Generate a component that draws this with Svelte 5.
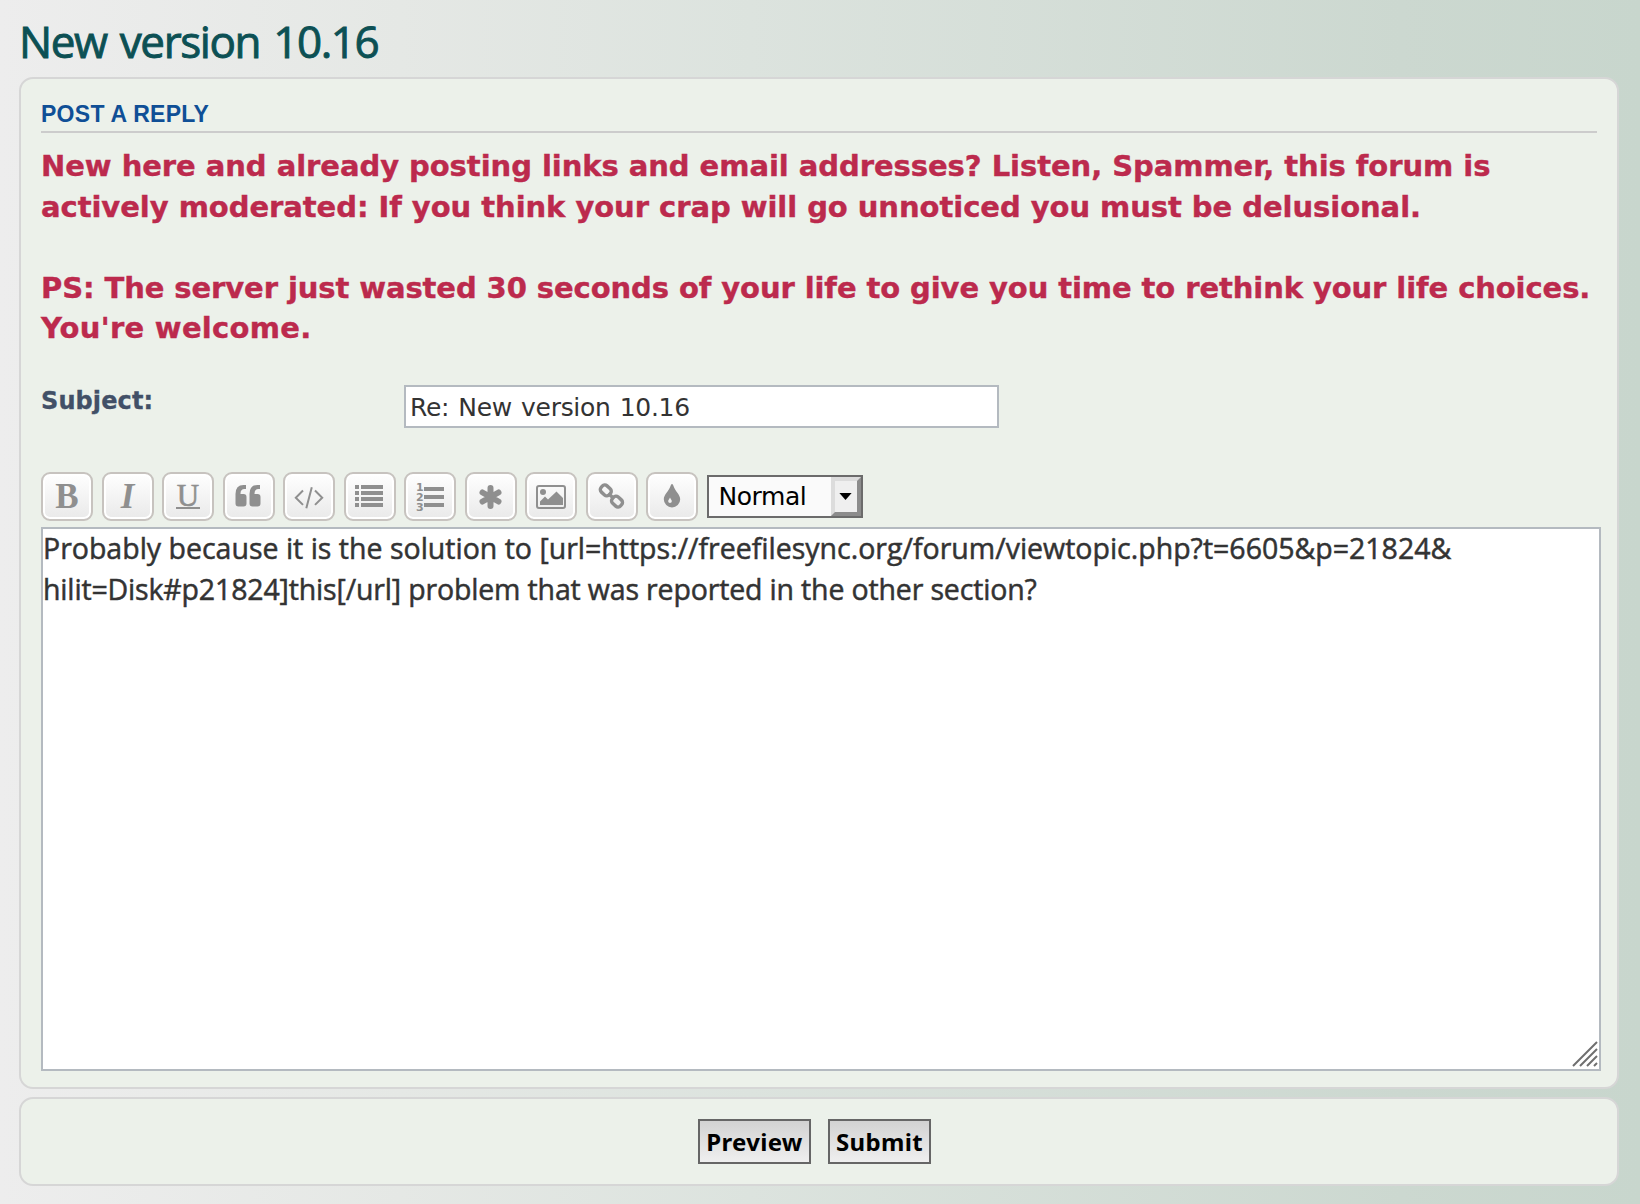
<script>
    let subject = 'Re: New version 10.16';

    const tools = ['bold', 'italic', 'underline', 'quote', 'code', 'list', 'ordered', 'asterisk', 'image', 'link', 'color'];
</script>

<main>
    <h1>New version 10.16</h1>

    <section class="panel editor">
        <h2>Post a reply</h2>
        <p class="warning">
            New here and already posting links and email addresses? Listen, Spammer, this forum is<br />
            actively moderated: If you think your crap will go unnoticed you must be delusional.<br />
            <br />
            <span class="tight">PS: The server just wasted 30 seconds of your life to give you time to rethink your life choices.</span><br />
            <span class="loose">You're welcome.</span>
        </p>

        <div class="subject">
            <label for="subject">Subject:</label>
            <input id="subject" type="text" bind:value={subject} />
        </div>

        <div class="toolbar">
            {#each tools as tool}
                <button class="tool" type="button" aria-label={tool}>
                    {#if tool === 'bold'}
                        <b class="letter">B</b>
                    {:else if tool === 'italic'}
                        <b class="letter italic">I</b>
                    {:else if tool === 'underline'}
                        <span class="letter underline">U</span>
                    {:else}
                        <svg width="48" height="45" viewBox="0 0 48 45" fill="#8f8f8f">
                            {#if tool === 'quote'}
                                <path d="M21 11v4h-1.500q-4 0-4 4.500v.500h3q3 0 3 3v6.500q0 3-3 3h-5q-3 0-3-3V20q0-9 8-9zM35 11v4h-1.500q-4 0-4 4.500v.500h3q3 0 3 3v6.500q0 3-3 3h-5q-3 0-3-3V20q0-9 8-9z" />
                            {:else if tool === 'code'}
                                <path d="M18 16.500l-7.200 7.200 7.200 7.200M30 16.500l7.200 7.200-7.200 7.200M26.800 13.300l-5.500 21" fill="none" stroke="#8f8f8f" stroke-width="2" />
                            {:else if tool === 'list'}
                                <path d="M9 11h4v4H9zM15 11h22v4H15zM9 17h4v4H9zM15 17h22v4H15zM9 23h4v4H9zM15 23h22v4H15zM9 29h4v4H9zM15 29h22v4H15z" />
                            {:else if tool === 'ordered'}
                                <path d="M18 13h20v4H18zM18 21h20v4H18zM18 29h20v4H18z" />
                                <text x="10" y="17">1</text>
                                <text x="10" y="27">2</text>
                                <text x="10" y="37">3</text>
                            {:else if tool === 'asterisk'}
                                <path d="M23.500 14v18M15.500 18.500l16 9M15.500 27.500l16-9" stroke="#8f8f8f" stroke-width="6" stroke-linecap="round" />
                            {:else if tool === 'image'}
                                <rect x="10" y="12" width="28" height="22" rx="2" fill="none" stroke="#8f8f8f" stroke-width="2" />
                                <circle cx="16" cy="18" r="3" />
                                <path d="M13 31v-3.500l5-5 3 3 8.500-8 6.500 6.500v7z" />
                            {:else if tool === 'link'}
                                <g fill="none" stroke="#8f8f8f" stroke-width="3.400">
                                    <rect x="-5.500" y="-4.200" width="11" height="8.400" rx="3.400" transform="translate(17.800 16.400) rotate(42)" />
                                    <rect x="-5.500" y="-4.200" width="11" height="8.400" rx="3.400" transform="translate(29 27.600) rotate(42)" />
                                    <path d="M20.500 19.500l5.500 5.200" />
                                </g>
                            {:else}
                                <path fill-rule="evenodd" d="M24 10q1 0 1.500 2c1.500 5 6.700 8.500 6.700 13.300a8.200 8.200 0 0 1-16.400 0c0-4.800 5.200-8.300 6.700-13.300q.500-2 1.500-2zM22 23.500c-.500 1.500-1.800 2.300-1.800 3.700a1.800 1.800 0 0 0 3.600 0c0-1.400-1.300-2.200-1.800-3.700z" />
                            {/if}
                        </svg>
                    {/if}
                </button>
            {/each}
            <div class="select">
                <span class="value">Normal</span>
                <span class="drop"><svg width="13" height="7" viewBox="0 0 14 8"><path d="M0 0h14L7 8z" /></svg></span>
            </div>
        </div>

        <div class="message">
            <div class="text" contenteditable="true" role="textbox" tabindex="0" aria-multiline="true" aria-label="Message">
                <div>Probably because it is the solution to [url=https://freefilesync.org/forum/viewtopic.php?t=6605&amp;p=21824&amp;</div>
                <div class="last">hilit=Disk#p21824]this[/url] problem that was reported in the other section?</div>
            </div>
            <svg class="grip" width="26" height="26" viewBox="0 0 26 26"><path d="M1 25L25 1M8 25L25 8M15 25l10-10M22 25l3-3" stroke="#6f6f6f" stroke-width="2" /></svg>
        </div>
    </section>

    <section class="panel actions">
        <button type="button">Preview</button>
        <button type="button">Submit</button>
    </section>
</main>

<style>
    :global(body) {
        margin: 0;
    }
    main {
        box-sizing: border-box;
        height: 1204px;
        padding: 0 21px 0 19px;
        overflow: hidden;
        background: linear-gradient(90deg, #ededed 0, #e5e8e5 400px, #dce3de 750px, #ccd8d0 1400px, #c8d6cd 1640px);
    }
    h1 {
        box-sizing: border-box;
        height: 77px;
        margin: 0;
        padding-top: 11px;
        font: 44px/60px "Open Sans", "Trebuchet MS", sans-serif;
        letter-spacing: -1.4px;
        word-spacing: 3px;
        -webkit-text-stroke: 0.9px;
        color: #0c5054;
        white-space: nowrap;
    }
    .panel {
        box-sizing: border-box;
        width: 1600px;
        border: 2px solid #d6d6d6;
        border-radius: 14px;
        background: #ecf1ea;
    }
    .editor {
        height: 1012px;
        padding: 0 16px 0 20px;
    }
    h2 {
        box-sizing: border-box;
        height: 54px;
        margin: 0 4px 0 0;
        padding-top: 21px;
        border-bottom: 2px solid #ccc;
        font: bold 23px/28px "Liberation Sans", Arial, sans-serif;
        letter-spacing: 0.27px;
        text-transform: uppercase;
        color: #0f4f96;
    }
    .warning {
        box-sizing: border-box;
        height: 230px;
        margin: 0;
        padding-top: 13px;
        font: bold 29px/40.6px "DejaVu Sans", Verdana, sans-serif;
        letter-spacing: -0.05px;
        -webkit-text-stroke: 0.4px;
        color: #bc2a4d;
        white-space: nowrap;
    }
    .tight {
        letter-spacing: -0.09px;
    }
    .loose {
        letter-spacing: 0.28px;
    }
    .subject {
        display: flex;
        height: 109px;
    }
    label {
        box-sizing: border-box;
        width: 363px;
        padding-top: 21px;
        font: bold 24px/34px "DejaVu Sans", Verdana, sans-serif;
        letter-spacing: 0.1px;
        -webkit-text-stroke: 0.3px;
        color: #425067;
    }
    input {
        box-sizing: border-box;
        width: 595px;
        height: 43px;
        margin-top: 22px;
        padding: 1px 4px 0;
        border: 2px solid #b4bac0;
        border-radius: 0;
        background: #fff;
        font: 25px "DejaVu Sans", Verdana, sans-serif;
        letter-spacing: -0.3px;
        word-spacing: 1.5px;
        color: #333;
    }
    .toolbar {
        display: flex;
        gap: 8.5px;
        height: 55px;
    }
    .tool {
        display: flex;
        align-items: center;
        justify-content: center;
        box-sizing: border-box;
        width: 52px;
        height: 49px;
        padding: 0;
        border: 2px solid #c7c3bf;
        border-radius: 9px;
        background: linear-gradient(#fff, #e9e9e9);
        box-shadow: inset 0 0 0 2px #fff;
    }
    .tool svg {
        flex: none;
    }
    .tool text {
        font: bold 11px "DejaVu Sans", sans-serif;
    }
    .letter {
        font: bold 35px/40px "Liberation Serif", serif;
        color: #8f8f8f;
    }
    .italic {
        font-style: italic;
    }
    .underline {
        width: 24px;
        height: 22px;
        border-bottom: 2px solid #8f8f8f;
        font: 31px/21px "Liberation Serif", serif;
        -webkit-text-stroke: 0.6px;
    }
    .select {
        display: flex;
        box-sizing: border-box;
        width: 156px;
        height: 43px;
        margin-top: 3px;
        border: 2px solid #6b6b6b;
        background: #fafafa;
    }
    .value {
        flex: 1;
        padding-left: 10px;
        font: 25px/40px "DejaVu Sans", Verdana, sans-serif;
        letter-spacing: -0.45px;
        color: #000;
    }
    .drop {
        display: flex;
        align-items: center;
        justify-content: center;
        box-sizing: border-box;
        width: 30px;
        border: 4px solid;
        border-color: #dcdcdc #8c8c8c #8c8c8c #dcdcdc;
        background: #efefef;
    }
    .message {
        position: relative;
        width: 1560px;
        height: 544px;
    }
    .text {
        box-sizing: border-box;
        height: 100%;
        border: 2px solid #b4bac0;
        background: #fff;
        overflow: hidden;
        font: 28.5px/41px "Open Sans", "Trebuchet MS", sans-serif;
        -webkit-text-stroke: 0.5px;
        white-space: nowrap;
        color: #333;
    }
    .text div {
        margin-top: -1px;
    }
    .text .last {
        margin-top: 0;
        letter-spacing: -0.16px;
    }
    .grip {
        position: absolute;
        right: 3px;
        bottom: 4px;
    }
    .actions {
        display: flex;
        justify-content: center;
        gap: 17px;
        height: 89px;
        margin-top: 8px;
        padding: 20px 9px 0 0;
    }
    .actions button {
        box-sizing: border-box;
        width: 113px;
        height: 45px;
        padding: 0;
        border: 2px solid #666;
        border-radius: 0;
        background: linear-gradient(#d2d2d2, #efefef);
        font: bold 24px "Noto Sans", sans-serif;
        letter-spacing: 0.3px;
        color: #000;
    }
    .actions button + button {
        width: 103px;
    }
</style>
